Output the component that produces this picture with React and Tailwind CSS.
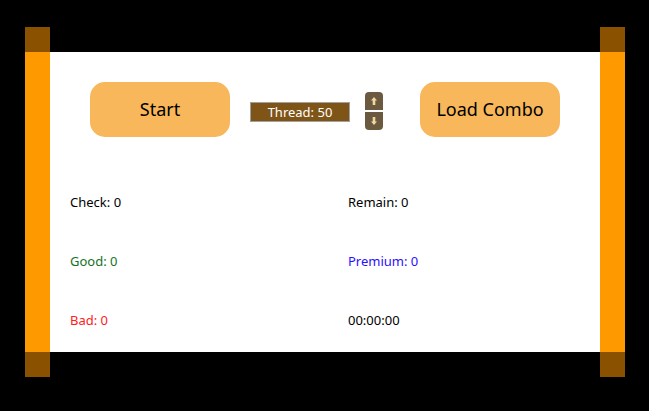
export default function App() {
  const stats = [
    { label: "Check: 0", color: "text-black" },
    { label: "Remain: 0", color: "text-black" },
    { label: "Good: 0", color: "text-[#14731e]" },
    { label: "Premium: 0", color: "text-[#2a10ff]" },
    { label: "Bad: 0", color: "text-[#ff2020]" },
    { label: "00:00:00", color: "text-black" },
  ];

  return (
    <div
      className="w-[649px] h-[411px] bg-black flex pt-[27px] pl-[25px]"
      style={{ fontFamily: '"Noto Sans", "Open Sans", sans-serif' }}
    >
      {/* left bar */}
      <div className="w-[25px] flex flex-col">
        <div className="h-[25px] bg-[#8a5200]" />
        <div className="h-[300px] bg-[#ff9900]" />
        <div className="h-[25px] bg-[#8a5200]" />
      </div>

      {/* panel */}
      <div className="mt-[25px] w-[550px] h-[300px] bg-white">
        <div className="flex items-start pt-[30px] pl-[40px]">
          <button className="w-[140px] h-[55px] rounded-[15px] bg-[#f7b75a] text-[18px] text-black">
            Start
          </button>
          <div className="ml-[20px] mt-[20px] w-[100px] h-[20px] bg-[#7f5417] border border-[#a0a0a0] text-white text-[13px] leading-[18px] text-center">
            Thread: 50
          </div>
          <div className="ml-[15px] mt-[10px] w-[18px] flex flex-col gap-[2px]">
            <div className="h-[18px] bg-[#6b5a3f] rounded-t-[4px] flex items-center justify-center">
              <svg width="8" height="10" viewBox="0 0 8 10">
                <path d="M4 1 L7 4.5 H5.3 V9 H2.7 V4.5 H1 Z" fill="#f3d7a0" />
              </svg>
            </div>
            <div className="h-[18px] bg-[#6b5a3f] rounded-b-[4px] flex items-center justify-center">
              <svg width="8" height="10" viewBox="0 0 8 10">
                <path d="M4 9 L7 5.5 H5.3 V1 H2.7 V5.5 H1 Z" fill="#f3d7a0" />
              </svg>
            </div>
          </div>
          <button className="ml-[37px] w-[140px] h-[55px] rounded-[15px] bg-[#f7b75a] text-[18px] text-black">
            Load Combo
          </button>
        </div>

        <div className="grid grid-cols-[278px_1fr] pl-[20px] mt-[56px]">
          {stats.map((s) => (
            <div key={s.label} className={`h-[59px] text-[13px] leading-[18px] ${s.color}`}>
              {s.label}
            </div>
          ))}
        </div>
      </div>

      {/* right bar */}
      <div className="w-[25px] flex flex-col">
        <div className="h-[25px] bg-[#8a5200]" />
        <div className="h-[300px] bg-[#ff9900]" />
        <div className="h-[25px] bg-[#8a5200]" />
      </div>
    </div>
  );
}
